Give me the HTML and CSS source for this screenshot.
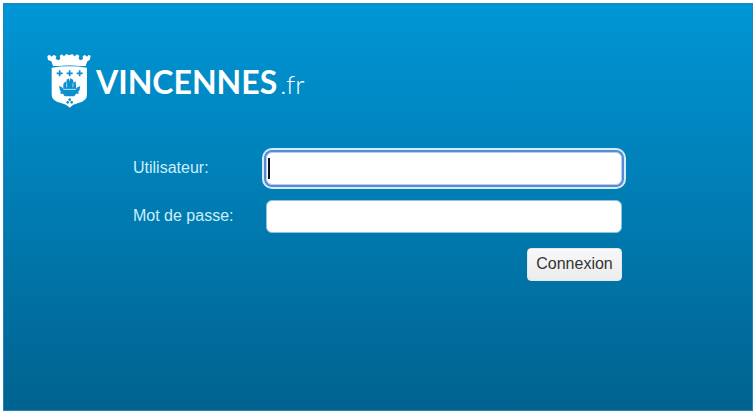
FILE: index.html
```html
<!DOCTYPE html>
<html lang="fr">
<head>
  <meta charset="UTF-8">
  <meta name="viewport" content="width=device-width, initial-scale=1.0">
  <title>Vincennes.fr - Connexion</title>
  <link rel="stylesheet" href="styles.css">
</head>
<body>
  <main class="panel">
    <header class="logo">
      <svg class="crest" viewBox="32 36 132 162" aria-hidden="true">
        <!-- couronne -->
        <path fill="#fff" d="M33 42 L40 38 L45 44 L52 39 L60 42 L58 51 L67 55 L72 50 L70 41 L77 37 L83 43 L90 36 L99 40 L108 36 L115 43 L122 37 L129 41 L127 50 L132 55 L140 51 L139 42 L146 39 L152 44 L158 38 L163 42 L160 54 L153 58 L148 72 L50 72 L45 58 L35 54 Z"/>
        <path fill="none" stroke="#0b8fcd" stroke-width="2" d="M48 75 Q100 66 150 75"/>
        <!-- écu -->
        <path fill="#fff" d="M46 77 Q100 69 152 77 V158 Q152 176 126 183 Q109 187 100 197 Q91 187 74 183 Q46 176 46 158 Z"/>
        <path fill="none" stroke="#0b8fcd" stroke-width="5" d="M61 94 H79 M70 85 V103 M91 94 H109 M100 85 V103 M121 94 H139 M130 85 V103"/>
        <path fill="#0b8fcd" d="M81 125 L88 118 L90 125 L91 113 L98 109 L100 119 L102 109 L110 113 L112 122 L118 118 L120 143 H81 Z"/>
        <path fill="none" stroke="#fff" stroke-width="2" d="M91 124 V136 M110 124 V136"/>
        <path fill="#0b8fcd" d="M68 131 L79 137 L81 143 H119 L121 137 L132 132 L129 146 L124 151 H127 V155 H119 L114 163 H85 L80 155 H72 V151 H75 L71 145 Z"/>
        <path fill="none" stroke="#fff" stroke-width="2" d="M82 142 H118"/>
        <g fill="#0b8fcd">
          <circle cx="100" cy="173" r="4"/>
          <circle cx="94" cy="181" r="4"/>
          <circle cx="106" cy="181" r="4"/>
        </g>
      </svg>
      <span class="brand">VINCENNES<span class="tld">.fr</span></span>
    </header>

    <form class="login">
      <label for="user">Utilisateur:</label>
      <input class="field" id="user" name="user" type="text" placeholder=" " autofocus>
      <label for="password">Mot de passe:</label>
      <input class="field" id="password" name="password" type="password" placeholder=" ">
      <button class="submit" type="submit">Connexion</button>
    </form>
  </main>
</body>
</html>
```
FILE: styles.css
```css
* {
  box-sizing: border-box;
}

body {
  margin: 0;
  padding: 3px 1px 1px 3px;
  min-height: 100vh;
  display: flex;
  background: #fff;
  font-family: "Liberation Sans", Arial, sans-serif;
}

.panel {
  flex: 1;
  padding: 50px 43px;
  background: linear-gradient(#0096d5, #00628f);
  border: 1px solid #2387b5;
}

.logo {
  display: flex;
  align-items: center;
  gap: 5px;
  height: 54px;
  color: #fff;
}

.crest {
  width: 44px;
  height: 54px;
}

.brand {
  padding-top: 4px;
  font-family: Lato, sans-serif;
  font-size: 32px;
  font-weight: 700;
  line-height: 32px;
}

.tld {
  margin-left: 3px;
  font-size: 26px;
  font-weight: 300;
}

.login {
  display: grid;
  grid-template-columns: 133px minmax(0, 356px);
  row-gap: 15px;
  margin: 44px 0 0 86px;
}

.login label {
  padding-top: 6px;
  font-size: 16px;
  line-height: 20px;
  color: #cdeffb;
}

.field {
  width: 100%;
  height: 33px;
  padding: 0 2px;
  border: 1px solid #8fc3e0;
  border-radius: 6px;
  background: #fff;
  color: #000;
  font: 18px "Liberation Sans", Arial, sans-serif;
}

.field:focus {
  border-color: #b4cff3;
  outline: none;
  box-shadow: 0 0 0 2px #588bd6, 0 0 0 4px #d5edfa;
}

/* steady caret while the field is empty */
.field:focus:placeholder-shown {
  background: #fff linear-gradient(#111, #111) 1px 50% / 2px 21px no-repeat;
  caret-color: transparent;
}

.submit {
  grid-column: 2;
  justify-self: end;
  width: 95px;
  height: 33px;
  padding: 0 0 2px;
  border: 1px solid #e4e8ea;
  border-radius: 4px;
  background: linear-gradient(#f8f8f8, #ececec);
  color: #333;
  font: 16px "Liberation Sans", Arial, sans-serif;
  cursor: pointer;
}
```
